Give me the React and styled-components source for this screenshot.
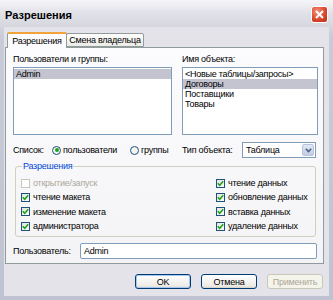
import React from 'react'
import styled, { createGlobalStyle } from 'styled-components'

const Global = createGlobalStyle`
    html, body {
        margin: 0;
        padding: 0;
        background: #c6cad6;
    }
    * {
        box-sizing: border-box;
    }
`

const font = `"Liberation Sans", Arial, sans-serif`

const rights = [
    { left: 'открытие/запуск', leftOn: false, disabled: true, right: 'чтение данных' },
    { left: 'чтение макета', leftOn: true, right: 'обновление данных' },
    { left: 'изменение макета', leftOn: true, right: 'вставка данных' },
    { left: 'администратора', leftOn: true, right: 'удаление данных' }
]

const objects = ['<Новые таблицы/запросы>', 'Договоры', 'Поставщики', 'Товары']

function Check({ on, disabled, children }) {
    return (
        <CheckRow disabled={disabled}>
            <Box disabled={disabled}>
                {on && (
                    <svg width="7" height="7" viewBox="0 0 7 7">
                        <path d="M0.8 3.3 L2.7 5.3 L6.2 1.2" fill="none" stroke="#21a121" strokeWidth="1.6" />
                    </svg>
                )}
            </Box>
            {children}
        </CheckRow>
    )
}

function Radio({ on, width, children }) {
    return (
        <RadioLabel width={width}>
            <Circle>{on && <Dot />}</Circle>
            {children}
        </RadioLabel>
    )
}

export default function App() {
    return (
        <Window>
            <Global />
            <TitleBar>
                <Title>Разрешения</Title>
                <Close>
                    <svg width="9" height="9" viewBox="0 0 9 9">
                        <path d="M1 1 L8 8 M8 1 L1 8" stroke="#fff" strokeWidth="2" />
                    </svg>
                </Close>
            </TitleBar>
            <Body>
                <Tabs>
                    <Tab active width={60}>Разрешения</Tab>
                    <Tab width={78}>Смена владельца</Tab>
                </Tabs>
                <Panel>
                    <Columns>
                        <div>
                            <Label>Пользователи и группы:</Label>
                            <List>
                                <Item selected>Admin</Item>
                            </List>
                        </div>
                        <div>
                            <Label>Имя объекта:</Label>
                            <List>
                                {objects.map((o, i) => (
                                    <Item key={o} selected={i === 1}>{o}</Item>
                                ))}
                            </List>
                        </div>
                    </Columns>
                    <Columns>
                        <Line>
                            <Caption width={39}>Список:</Caption>
                            <Radio on width={78}>пользователи</Radio>
                            <Radio>группы</Radio>
                        </Line>
                        <Line>
                            <Caption width={60}>Тип объекта:</Caption>
                            <Combo>
                                <span>Таблица</span>
                                <DropButton>
                                    <svg width="7" height="5" viewBox="0 0 7 5">
                                        <path d="M0.8 0.8 L3.5 3.6 L6.2 0.8" fill="none" stroke="#4d6185" strokeWidth="1.6" />
                                    </svg>
                                </DropButton>
                            </Combo>
                        </Line>
                    </Columns>
                    <Group>
                        <Legend>Разрешения</Legend>
                        <Checks>
                            {rights.map(r => (
                                <React.Fragment key={r.left}>
                                    <Check on={r.leftOn} disabled={r.disabled}>{r.left}</Check>
                                    <Check on>{r.right}</Check>
                                </React.Fragment>
                            ))}
                        </Checks>
                    </Group>
                    <UserRow>
                        <Caption width={67}>Пользователь:</Caption>
                        <Field>Admin</Field>
                    </UserRow>
                </Panel>
                <Buttons>
                    <Button primary>OK</Button>
                    <Button>Отмена</Button>
                    <Button disabled>Применить</Button>
                </Buttons>
            </Body>
        </Window>
    )
}

const Window = styled.div`
    width: 333px;
    height: 300px;
    display: flex;
    flex-direction: column;
    background: linear-gradient(#eeeef3, #c9ccd8 12%, #bfc3d1);
    font-family: ${font};
    font-size: 9px;
    letter-spacing: -0.25px;
    color: #000;
    white-space: nowrap;
`

const TitleBar = styled.div`
    height: 27px;
    display: flex;
    align-items: center;
    justify-content: space-between;
    padding: 2px 5px 0 5px;
    background: linear-gradient(#f6f6f9, #e2e2e9 45%, #d6d6de);
`

const Title = styled.div`
    font-weight: bold;
    font-size: 11px;
    letter-spacing: 0;
`

const Close = styled.div`
    width: 17px;
    height: 17px;
    border: 1px solid #fff;
    border-radius: 3px;
    background: radial-gradient(circle at 35% 30%, #f2907a, #d8442a 60%, #b3301a);
    display: flex;
    align-items: center;
    justify-content: center;
`

const Body = styled.div`
    flex: 1;
    margin: 0 4px 4px 4px;
    padding: 5px 5px 0 1px;
    background: #e4e3e9;
    display: flex;
    flex-direction: column;
`

const Tabs = styled.div`
    display: flex;
    align-items: flex-end;
    height: 15px;
    margin-left: 2px;
    position: relative;
    z-index: 1;
`

const Tab = styled.div`
    width: ${({ width }) => width}px;
    height: ${({ active }) => (active ? '16px' : '14px')};
    display: flex;
    align-items: center;
    justify-content: center;
    border: 1px solid #919b9c;
    border-bottom: ${({ active }) => (active ? 'none' : '1px solid #919b9c')};
    border-top: ${({ active }) => (active ? '2px solid #f2a43a' : '1px solid #919b9c')};
    border-radius: 2px 2px 0 0;
    background: ${({ active }) => (active ? '#fcfcfe' : 'linear-gradient(#fdfdfd, #ecebe6)')};
    margin-bottom: ${({ active }) => (active ? '-1px' : '0')};
    margin-left: ${({ active }) => (active ? '0' : '-1px')};
`

const Panel = styled.div`
    height: 217px;
    border: 1px solid #919b9c;
    background: linear-gradient(#fcfcfe, #f4f4f6);
    padding: 6px 5px 0 7px;
    display: flex;
    flex-direction: column;
`

const Columns = styled.div`
    display: grid;
    grid-template-columns: 159px 136px;
    column-gap: 10px;
`

const Label = styled.div`
    height: 11px;
    line-height: 11px;
    margin-bottom: 2px;
`

const List = styled.div`
    height: 68px;
    border: 1px solid #7f9db9;
    background: #fff;
    padding-top: 1px;
`

const Item = styled.div`
    height: 10px;
    line-height: 10px;
    padding-left: 2px;
    background: ${({ selected }) => (selected ? '#c4c4d0' : 'transparent')};
`

const Line = styled.div`
    display: flex;
    align-items: center;
    height: 16px;
    margin-top: 7px;
`

const Caption = styled.span`
    flex: none;
    width: ${({ width }) => (width ? `${width}px` : 'auto')};
`

const RadioLabel = styled.label`
    flex: none;
    width: ${({ width }) => (width ? `${width}px` : 'auto')};
    display: flex;
    align-items: center;
`

const Circle = styled.span`
    width: 9px;
    height: 9px;
    border: 1px solid #1c5180;
    border-radius: 50%;
    background: #f4f4f0;
    margin-right: 2px;
    display: flex;
    align-items: center;
    justify-content: center;
`

const Dot = styled.span`
    width: 4px;
    height: 4px;
    border-radius: 50%;
    background: #21a121;
`

const Combo = styled.div`
    width: 74px;
    height: 16px;
    border: 1px solid #7f9db9;
    background: #fff;
    display: flex;
    align-items: center;
    justify-content: space-between;
    padding: 1px 1px 1px 3px;
`

const DropButton = styled.span`
    width: 12px;
    height: 12px;
    border-radius: 2px;
    background: linear-gradient(#e4e8f4, #c2cbe2);
    border: 1px solid #b8c4dd;
    display: flex;
    align-items: center;
    justify-content: center;
`

const Group = styled.fieldset`
    margin: 3px 0 0 2px;
    width: 301px;
    height: 76px;
    border: 1px solid #d0d0bf;
    border-radius: 3px;
    padding: 5px 0 0 5px;
`

const Legend = styled.legend`
    color: #0046d5;
    padding: 0 1px;
    margin-left: 1px;
    line-height: 10px;
`

const Checks = styled.div`
    display: grid;
    grid-template-columns: 195px auto;
    grid-auto-rows: 14.3px;
`

const CheckRow = styled.label`
    display: flex;
    align-items: center;
    color: ${({ disabled }) => (disabled ? '#aca899' : '#000')};
`

const Box = styled.span`
    width: 9px;
    height: 9px;
    margin-right: 3px;
    border: 1px solid ${({ disabled }) => (disabled ? '#cac8bb' : '#1c5180')};
    background: ${({ disabled }) => (disabled ? '#fff' : 'linear-gradient(135deg, #e4e4de, #fbfbf9)')};
    display: flex;
    align-items: center;
    justify-content: center;
`

const UserRow = styled.div`
    display: flex;
    align-items: center;
    margin-top: 6px;
`

const Field = styled.div`
    width: 237px;
    height: 16px;
    border: 1px solid #7f9db9;
    border-radius: 2px;
    background: #fff;
    padding-left: 3px;
    line-height: 14px;
`

const Buttons = styled.div`
    display: flex;
    justify-content: flex-end;
    gap: 10px;
    margin-top: 10px;
    padding-right: 1px;
`

const Button = styled.div`
    width: 56px;
    height: 15px;
    border: 1px solid ${({ disabled }) => (disabled ? '#c9c7ba' : '#003c74')};
    border-radius: 3px;
    background: ${({ disabled }) => (disabled ? '#f5f4ea' : 'linear-gradient(#ffffff, #ecebe6 85%, #d6d0c5)')};
    box-shadow: ${({ primary }) => (primary ? 'inset 0 0 0 1px #a8c8f0' : 'none')};
    color: ${({ disabled }) => (disabled ? '#aca899' : '#000')};
    display: flex;
    align-items: center;
    justify-content: center;
`
